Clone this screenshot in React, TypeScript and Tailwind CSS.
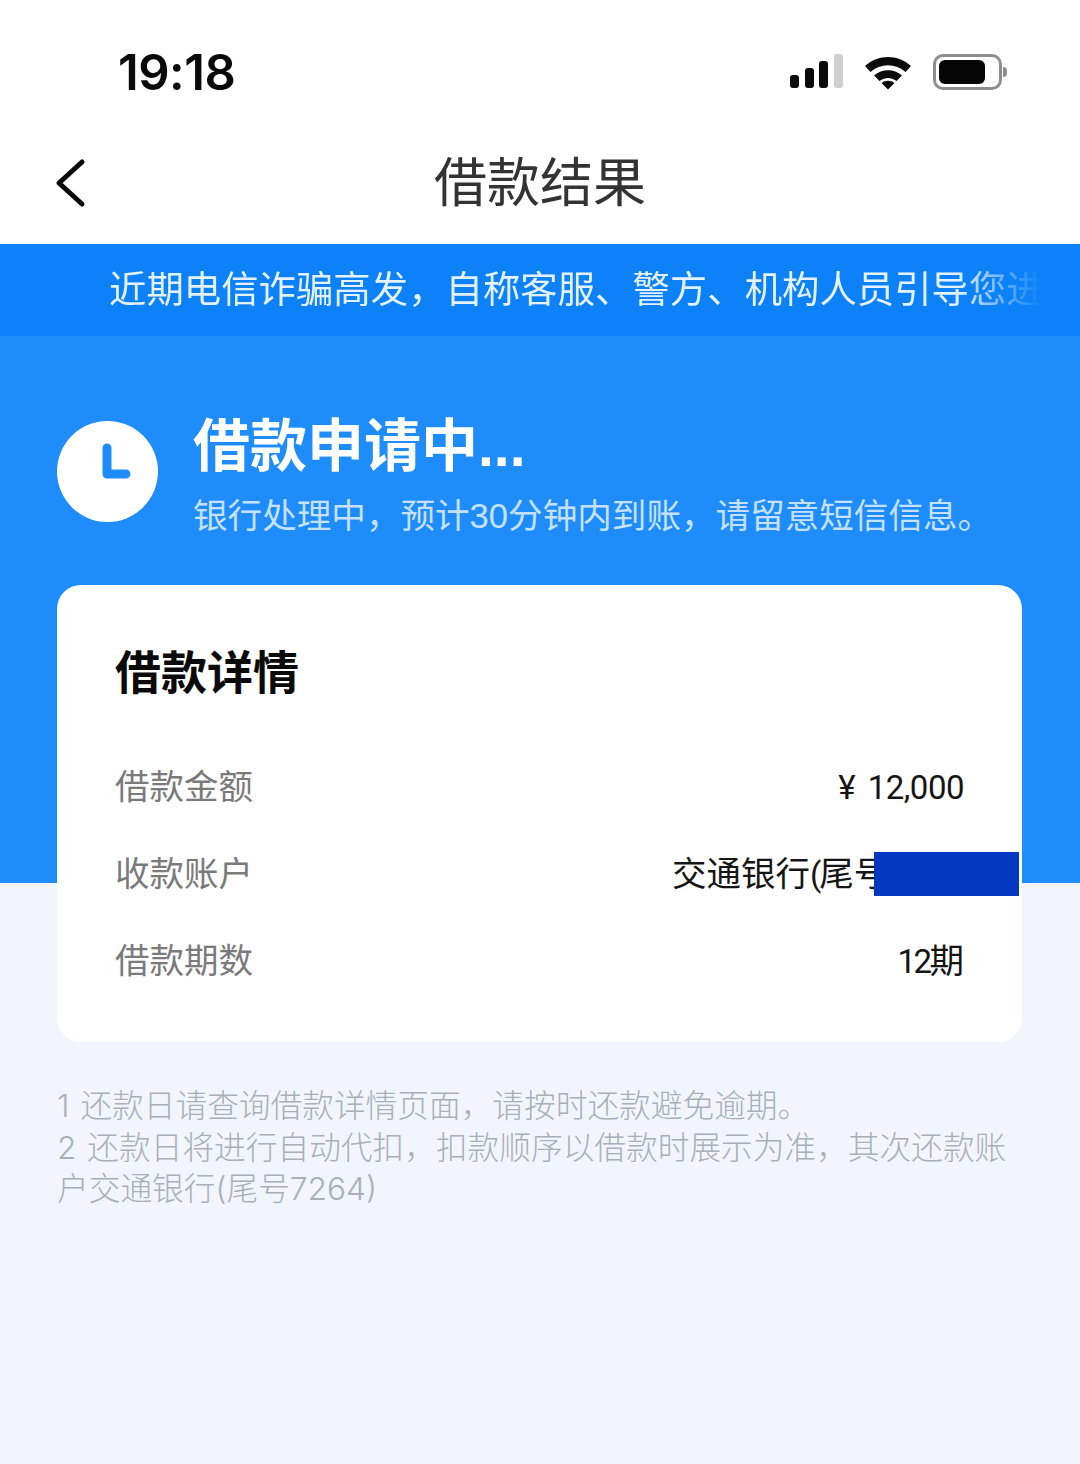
import React from "react";

const cjk = "font-['Liberation_Sans','Noto_Sans_CJK_SC',sans-serif]";

// Digits in the detail rows are narrower than the CJK text beside them
const Num = ({ children, className }: { children: React.ReactNode; className: string }) => (
  <span className={`font-['Roboto',sans-serif] text-[33px] ${className}`}>{children}</span>
);

const rows = [
  {
    label: "借款金额",
    value: (
      <Num className="tracking-[-0.5px] [word-spacing:5px]">¥ 12,000</Num>
    ),
  },
  {
    label: "收款账户",
    value: (
      <>
        交通银行<Num className="tracking-[-2px]">(</Num>尾号<Num className="tracking-[-2px]">7264)</Num>
      </>
    ),
  },
  {
    label: "借款期数",
    value: (
      <>
        <Num className="tracking-[-2.500px]">12</Num>期
      </>
    ),
  },
];

const StatusIcons = () => (
  <div className="flex items-center">
    {/* signal */}
    <svg width="56" height="38" viewBox="0 0 56 38" className="mr-[19px]">
      <rect x="1" y="22" width="9" height="13" rx="3" fill="#0a0a0a" />
      <rect x="16" y="15" width="9" height="20" rx="3" fill="#0a0a0a" />
      <rect x="30" y="8" width="9" height="27" rx="3" fill="#0a0a0a" />
      <rect x="45" y="1" width="9" height="34" rx="3" fill="#cfcfcf" />
    </svg>
    {/* wifi */}
    <svg width="48" height="36" viewBox="0 0 48 36" className="mr-[21px]">
      <path d="M1 12C14 0 34 0 47 12L41.500 18C31.500 9 16.500 9 6.500 18Z" fill="#0a0a0a" />
      <path d="M10 21.500C18 14.500 30 14.500 38 21.500L32.500 27C27 23 21 23 15.500 27Z" fill="#0a0a0a" />
      <path d="M17.500 29C21.500 26 26.500 26 30.500 29L24 35.500Z" fill="#0a0a0a" />
    </svg>
    {/* battery */}
    <div className="flex items-center">
      <div className="flex h-[36px] w-[69px] items-center rounded-[10px] border-[3px] border-[#8e8e8e] p-[3px]">
        <div className="h-[24px] w-[46px] rounded-[6px] bg-[#050505]" />
      </div>
      <div className="ml-[1px] h-[10px] w-[4px] rounded-r-full bg-[#8e8e8e]" />
    </div>
  </div>
);

export default function App() {
  return (
    <div className={`${cjk} flex min-h-[1464px] w-[1080px] flex-col bg-white`}>
      {/* Status bar */}
      <div className="flex h-[130px] items-center justify-between pl-[118px] pr-[73px] pt-[14px]">
        <span className="font-['Inter',sans-serif] text-[49px] font-semibold leading-none tracking-[-0.5px] text-[#0a0a0a]">
          19:18
        </span>
        <StatusIcons />
      </div>

      {/* Nav bar */}
      <div className="relative flex h-[114px] items-center justify-center pb-[8px]">
        <svg width="32" height="52" viewBox="0 0 32 52" className="absolute left-[55px] top-[27px]">
          <path d="M27 5L4 26L27 47" fill="none" stroke="#0a0a0a" strokeWidth="5" strokeLinecap="round" strokeLinejoin="round" />
        </svg>
        <h1 className="text-[53px] font-normal leading-none text-[#333333]">借款结果</h1>
      </div>

      {/* Notice */}
      <div className="h-[92px] bg-[#0d82f8] pl-[109px] pr-[40px]">
        <div className="whitespace-nowrap text-[37.400px] leading-[92px] text-[#e4f1ff] [mask-image:linear-gradient(to_right,black_91%,transparent_100%)]">
          近期电信诈骗高发，自称客服、警方、机构人员引导您进
        </div>
      </div>

      {/* Body */}
      <main className="flex-1 bg-[linear-gradient(#1e8cfb_0,#1e8cfb_547px,#f2f6fc_547px)] px-[57px] pt-[80px]">
        <div className="flex items-start">
          <div className="mt-[5px] flex h-[101px] w-[101px] shrink-0 items-center justify-center rounded-full bg-white">
            <svg width="101" height="101" viewBox="0 0 101 101">
              <path d="M50 27V53H69" fill="none" stroke="#1e8cfb" strokeWidth="9" strokeLinecap="round" strokeLinejoin="round" />
            </svg>
          </div>
          <div className="ml-[35px]">
            <div className="text-[57px] font-bold leading-[60px] text-white">借款申请中...</div>
            <div className="mt-[15px] whitespace-nowrap text-[34.600px] leading-[50px] text-[#c5e1ff]">
              银行处理中，预计30分钟内到账，请留意短信信息。
            </div>
          </div>
        </div>

        {/* Detail card */}
        <section className="relative mt-[44px] h-[457px] w-[965px] rounded-[24px] bg-white px-[58px] pt-[58px]">
          <h2 className="text-[46px] font-bold leading-[60px] text-[#0a0a0a]">借款详情</h2>
          <div className="mt-[55px] flex flex-col gap-[27px]">
            {rows.map((row) => (
              <div key={row.label} className="flex h-[60px] items-center justify-between text-[34.500px]">
                <span className="text-[#7a7a7a]">{row.label}</span>
                <span className="text-[#151515]">{row.value}</span>
              </div>
            ))}
          </div>
          {/* Redacted account number */}
          <div className="absolute left-[817px] top-[267px] h-[44px] w-[145px] bg-[#0338c0]" />
        </section>

        {/* Notes */}
        <div className="mt-[43px] font-['Inter','Noto_Sans_CJK_SC',sans-serif] text-[31.700px] font-light leading-[41.500px] text-[#a9afb9] [word-spacing:2px]">
          <p>1 还款日请查询借款详情页面，请按时还款避免逾期。</p>
          <p>2 还款日将进行自动代扣，扣款顺序以借款时展示为准，其次还款账户交通银行(尾号7264)</p>
        </div>
      </main>
    </div>
  );
}
